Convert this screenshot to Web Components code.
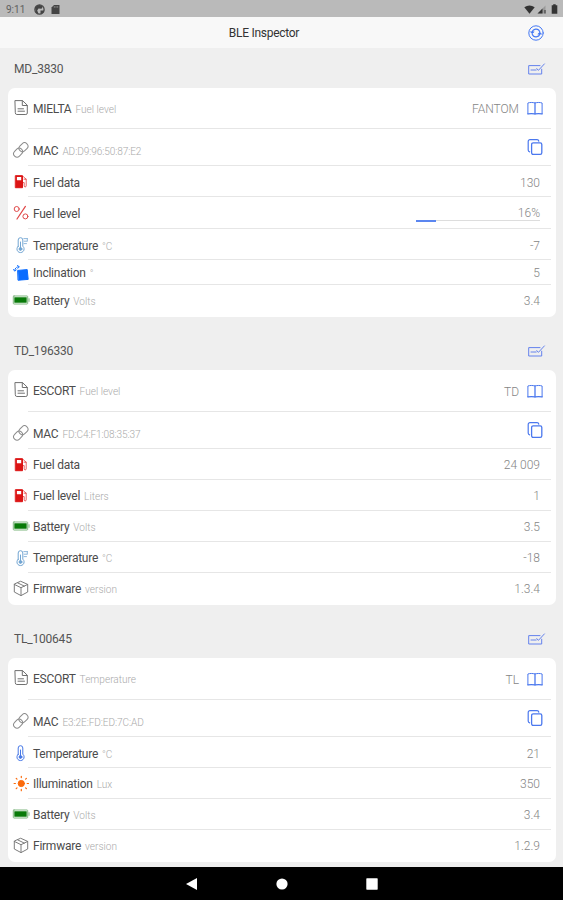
<!DOCTYPE html>
<html lang="en">
<head>
<meta charset="utf-8">
<title>BLE Inspector</title>
<style>
  html, body { margin: 0; height: 100%; overflow: hidden; }
  body { background: #efefef; font-family: Roboto, "Liberation Sans", sans-serif; }
</style>
</head>
<body>
<inspector-screen>
  <status-bar slot="status" time="9:11"></status-bar>
  <title-bar slot="title" name="BLE Inspector"></title-bar>

  <sensor-card name="MD_3830">
    <sensor-row icon="doc" label="MIELTA" note="Fuel level" value="FANTOM" action="book" style="--h: 41px; --dy: 1px"></sensor-row>
    <sensor-row icon="link" label="MAC" note="AD:D9:96:50:87:E2" action="copy" style="--h: 37px; --dy: 4px; --tight: -.1px"></sensor-row>
    <sensor-row icon="fuel" label="Fuel data" value="130" style="--h: 31px; --dy: 2px"></sensor-row>
    <sensor-row icon="percent" label="Fuel level" value="16%" progress="16" style="--h: 32px; --dy: 2px"></sensor-row>
    <sensor-row icon="thermo-pale" label="Temperature" note="°C" value="-7" style="--h: 31px; --dy: 2px"></sensor-row>
    <sensor-row icon="tilt" label="Inclination" note="°" value="5" style="--h: 25px; --dy: 1px"></sensor-row>
    <sensor-row icon="battery" label="Battery" note="Volts" value="3.4" style="--h: 32px"></sensor-row>
  </sensor-card>

  <sensor-card name="TD_196330">
    <sensor-row icon="doc" label="ESCORT" note="Fuel level" value="TD" action="book" style="--h: 42px; --dy: 1px"></sensor-row>
    <sensor-row icon="link" label="MAC" note="FD:C4:F1:08:35:37" action="copy" style="--h: 37px; --dy: 4px; --tight: -.1px"></sensor-row>
    <sensor-row icon="fuel" label="Fuel data" value="24 009" style="--h: 31px; --dy: 1px"></sensor-row>
    <sensor-row icon="fuel" label="Fuel level" note="Liters" value="1" style="--h: 31px; --dy: 1px"></sensor-row>
    <sensor-row icon="battery" label="Battery" note="Volts" value="3.5" style="--h: 31px; --dy: 1px"></sensor-row>
    <sensor-row icon="thermo-pale" label="Temperature" note="°C" value="-18" style="--h: 31px; --dy: 1px"></sensor-row>
    <sensor-row icon="cube" label="Firmware" note="version" value="1.3.4" style="--h: 32px"></sensor-row>
  </sensor-card>

  <sensor-card name="TL_100645">
    <sensor-row icon="doc" label="ESCORT" note="Temperature" value="TL" action="book" style="--h: 42px; --dy: 1px"></sensor-row>
    <sensor-row icon="link" label="MAC" note="E3:2E:FD:ED:7C:AD" action="copy" style="--h: 37px; --dy: 4px; --tight: -.1px"></sensor-row>
    <sensor-row icon="thermo" label="Temperature" note="°C" value="21" style="--h: 31px; --dy: 2px"></sensor-row>
    <sensor-row icon="sun" label="Illumination" note="Lux" value="350" style="--h: 31px; --dy: 1px"></sensor-row>
    <sensor-row icon="battery" label="Battery" note="Volts" value="3.4" style="--h: 31px; --dy: 1px"></sensor-row>
    <sensor-row icon="cube" label="Firmware" note="version" value="1.2.9" style="--h: 32px"></sensor-row>
  </sensor-card>

  <nav-bar slot="nav"></nav-bar>
</inspector-screen>

<script>
(() => {
  const THERMO = '<path d="M5.2 9.2V3a2.3 2.3 0 0 1 4.6 0v6.2a3.6 3.6 0 1 1-4.6 0z"/><path d="M7.5 5v6"/><circle cx="7.5" cy="12" r="1.4" fill="currentColor"/>';

  const ICONS = {
    doc: { color: '#707070', body: '<path d="M2.3.6h7.2l4.8 4.6V13a1.5 1.5 0 0 1-1.5 1.5h-9A1.5 1.5 0 0 1 2.3 13z"/><path d="M9.3.8v4.7h4.8"/><path d="M5 8.8h5.5M5 11.2h6.5"/>' },
    link: { color: '#8c8c8c', body: '<g transform="rotate(-45 8 8)"><rect x="-.8" y="4.4" width="9.8" height="6.8" rx="3.4"/><rect x="6.8" y="4.4" width="9.8" height="6.8" rx="3.4"/></g>' },
    fuel: { color: '#dc1414', body: '<rect x="2.7" y="1.7" width="6.8" height="12" fill="currentColor"/><path d="M3.9 2.9h4.3v3.4H3.9z" fill="#fff" stroke="none"/><path d="M10.3 2.6l2.9 2.7v6.6a1 1 0 0 1-2 0V8.6H9.7" opacity=".65"/><path d="M11 5.2h2.1" opacity=".65"/>' },
    percent: { color: '#e04848', body: '<circle cx="3.7" cy="4" r="2.5"/><circle cx="12.4" cy="11.4" r="2.5"/><path d="M12.4 1.4 4 14" stroke-width="1.2"/>' },
    'thermo-pale': { color: '#72a5d2', body: THERMO + '<path d="M10.8 1.6h3.7M11.2 4.2h2.8M11 6.6h2.5M14.3 2v2" opacity=".8"/>' },
    thermo: { color: '#4778e6', body: THERMO },
    tilt: { color: '#0a6cff', body: '<path d="m5 5.4 9.2-.8 1 9.8-9.8.8z" fill="currentColor"/><path d="M1.8 5.2C2 3.3 3.4 2 5.4 1.8" stroke-dasharray="2.2 1.4"/><path d="m4.4.5 2 1.3-1.7 1.6M.5 4.5l1.2 1.7 1.6-1.3" stroke-width=".9"/>' },
    battery: { color: '#087a08', body: '<rect x=".3" y="3" width="14.4" height="8" rx=".7" stroke="#7db57d"/><path d="M1.3 4.3h12.4v5.4H1.3z" fill="currentColor" stroke="none"/><path d="M16 5.7v2.7" stroke="#7db57d"/>' },
    cube: { color: '#7c7c7c', body: '<path d="m8 .4 6.7 3V11L8 14.6 1.3 11V3.4zM1.3 3.4 8 6.7l6.7-3.3M8 6.7v7.9M4.7 1.9l6.6 3.2"/>' },
    sun: { color: '#fb6a0b', body: '<circle cx="8.3" cy="7.5" r="3.1" fill="currentColor"/><path d="M8.3.3v1.3M8.3 13.4v1.3M1.1 7.5h1.3M14.2 7.5h1.3M3.2 2.4l.8.8M12.6 11.8l.8.8M13.4 2.4l-.8.8M4 11.8l-.8.8" stroke-width="1.2"/>' },
    book: { color: '#4b78ee', body: '<path d="M.9 13.9V3C2.8 2.3 5.8 2.3 8 3c2.2-.7 5.2-.7 7.100 0v10.900"/><path d="M8 3v10.900" stroke-width="1.3"/><path d="M.9 13.900c2-.4 5-.4 7.100 0 2.100-.4 5.100-.4 7.100 0" stroke-width="1.2"/>' },
    copy: { color: '#4b78ee', body: '<rect x="4.6" y="3.8" width="10.2" height="11.6" rx="1.6" stroke-width="1.3"/><path d="M2.6 12.8A1.8 1.8 0 0 1 1.2 11V2.4A1.8 1.8 0 0 1 3 .6h7a1.8 1.8 0 0 1 1.8 1.5" stroke-width="1.2"/>' },
    edit: { color: '#6482ed', body: '<path d="M12 4.6H.7V13h13V8.200"/><path d="m8.8 7.6 1.6 1.8 6-6.5"/><path d="M3 9h5.2" stroke-dasharray="1.4 .7"/>' },
    sync: { color: '#4478f4', body: '<circle cx="8" cy="8" r="7.2"/><path d="M4.2 7.4A3.9 3.9 0 0 1 11.7 6.6M11.8 8.7A3.9 3.9 0 0 1 4.3 9.4" stroke-width="1.2"/><path d="m2.7 6.9 1.5 1.9 1.7-1.7zM10.1 8.9l1.7-1.8 1.6 1.9z" fill="currentColor" stroke-width=".6"/>' }
  };

  class BleIcon extends HTMLElement {
    connectedCallback() {
      if (this.shadowRoot) return;
      const icon = ICONS[this.getAttribute('name')];
      this.attachShadow({ mode: 'open' }).innerHTML = `
        <style>
          :host { display: block; flex: none; width: 16px; height: 16px; color: ${icon.color}; }
          svg {
            display: block; width: 100%; height: 100%; overflow: visible;
            fill: none; stroke: currentColor; stroke-width: 1;
            stroke-linecap: round; stroke-linejoin: round;
          }
        </style>
        <svg viewBox="0 0 16 16" aria-hidden="true">${icon.body}</svg>
      `;
    }
  }

  class StatusBar extends HTMLElement {
    connectedCallback() {
      if (this.shadowRoot) return;
      this.attachShadow({ mode: 'open' }).innerHTML = `
        <style>
          :host {
            display: flex; align-items: center; box-sizing: border-box; height: 17px;
            padding: 1px 5px 0 6px; background: #bababa; color: #606060; font-size: 10px;
          }
          .time { width: 28px; }
          svg { display: block; }
          .globe { margin-right: 6px; }
          .system { display: flex; align-items: center; gap: 2px; margin-left: auto; }
        </style>
        <span class="time">${this.getAttribute('time')}</span>
        <svg class="globe" width="11" height="11" viewBox="0 0 11 11"><circle cx="5.5" cy="5.5" r="4.6" fill="none" stroke="#444" stroke-width="1.3"/><path d="M1 3.2 3.5 1.2 6 1l3 1.5-1.5 2.3-3-.3-1.3 2L4.5 9.800 2 9zM6.5 6.5h4L9 9l-2.500 1z" fill="#444"/></svg>
        <svg width="9" height="11" viewBox="0 0 9 11"><path d="M3 1h5.5v9h-8V3.6z" fill="#444"/><path d="M3.3 2.2v1.5M5 2.2v1.5M6.7 2.2v1.5" stroke="#aaa" stroke-width=".7"/></svg>
        <span class="system">
          <svg width="11" height="9" viewBox="0 0 11 9"><path d="M.3 2.2Q5.5-1 10.7 2.2L5.5 8.7z" fill="#333"/></svg>
          <svg width="9" height="9" viewBox="0 0 9 9"><path d="M8.5.5v8h-8z" fill="#999"/><path d="M5.5 3.5v5h-5zM7.5 5h1v3.5h-1z" fill="#333"/></svg>
          <svg style="margin-left: 3px" width="7" height="10" viewBox="0 0 7 10"><path d="M2.2.3h2.5v1h1.6v8.4H.7V1.3h1.5z" fill="#333"/></svg>
        </span>
      `;
    }
  }

  class TitleBar extends HTMLElement {
    connectedCallback() {
      if (this.shadowRoot) return;
      this.attachShadow({ mode: 'open' }).innerHTML = `
        <style>
          :host {
            display: grid; grid-template-columns: 1fr auto 1fr; align-items: center;
            box-sizing: border-box; height: 31px; padding: 0 19px 0 0; background: #f8f8f8;
          }
          h1 {
            grid-column: 2; margin: 0 16px 0 0; color: #333;
            font-size: 12px; font-weight: 400; line-height: 16px; letter-spacing: -.28px;
          }
          ble-icon { justify-self: end; }
        </style>
        <h1>${this.getAttribute('name')}</h1>
        <ble-icon name="sync"></ble-icon>
      `;
    }
  }

  class SensorCard extends HTMLElement {
    connectedCallback() {
      if (this.shadowRoot) return;
      this.attachShadow({ mode: 'open' }).innerHTML = `
        <style>
          :host { display: block; }
          header {
            display: flex; justify-content: space-between; align-items: center;
            box-sizing: border-box; height: var(--head, 40px); padding: 1px 19px 0 14px;
            color: #555; font-size: 12px; letter-spacing: -.2px;
          }
          section { border-radius: 7px; margin: 0 7px 0 8px; background: #fff; overflow: hidden; }
        </style>
        <header><span>${this.getAttribute('name')}</span><ble-icon name="edit"></ble-icon></header>
        <section><slot></slot></section>
      `;
    }
  }

  class SensorRow extends HTMLElement {
    connectedCallback() {
      if (this.shadowRoot) return;
      const attr = (name) => this.getAttribute(name) || '';
      const action = attr('action');
      const progress = attr('progress');
      this.attachShadow({ mode: 'open' }).innerHTML = `
        <style>
          :host { display: flex; height: var(--h); padding-left: 5px; font-size: 12px; }
          .lead { display: flex; align-items: center; flex: none; width: 15px; }
          .lead ble-icon[name="link"] { margin-top: 5px; }
          .lead ble-icon[name="doc"] { margin-bottom: 2px; }
          .body {
            display: flex; align-items: center; flex: 1; box-sizing: border-box;
            margin-right: 5px; padding-right: 11px; border-bottom: 1px solid #e6e6e6;
          }
          :host(:last-child) .body { border-bottom: 0; }
          .text { padding: calc(var(--dy, 0px) * 2) 0 0 5px; white-space: pre; line-height: 16px; }
          .label { color: #4c4c4c; letter-spacing: -.25px; }
          .note { margin-left: 4px; color: #aaa; font-size: 10.1px; font-weight: 300; letter-spacing: var(--tight, 0); }
          .value { margin-left: auto; padding-top: calc(var(--dy, 0px) * 2); color: #858585; font-weight: 300; line-height: 16px; }
          .gauge { display: flex; flex-direction: column; width: 124px; margin-left: auto; padding-top: 2px; }
          .gauge .value { padding: 0; line-height: 14px; }
          .track { height: 1px; background: #ddd; }
          .fill { height: 2px; background: #5b86f0; }
          .body.has-action { padding-right: 8px; }
          .action { margin-left: 8px; }
          .value:empty + .action { margin-left: 0; }
        </style>
        <div class="lead"><ble-icon name="${attr('icon')}"></ble-icon></div>
        <div class="body ${action ? 'has-action' : ''}">
          <div class="text"><span class="label">${attr('label')}</span><span class="note">${attr('note')}</span></div>
          ${progress
            ? `<div class="gauge"><span class="value">${attr('value')}</span><div class="track"><div class="fill" style="width: ${progress}%"></div></div></div>`
            : `<span class="value">${attr('value')}</span>`}
          ${action ? `<ble-icon class="action" name="${action}"></ble-icon>` : ''}
        </div>
      `;
    }
  }

  class NavBar extends HTMLElement {
    connectedCallback() {
      if (this.shadowRoot) return;
      this.attachShadow({ mode: 'open' }).innerHTML = `
        <style>
          :host { display: flex; justify-content: center; align-items: center; gap: 78px; height: 33px; background: #000; }
          svg { display: block; width: 12px; height: 12px; fill: #fff; }
        </style>
        <svg viewBox="0 0 12 12"><path d="M11 0v12L0 6z"/></svg>
        <svg viewBox="0 0 12 12"><circle cx="6" cy="6" r="5.6"/></svg>
        <svg viewBox="0 0 12 12"><rect x=".3" y=".3" width="11.4" height="11.4" rx=".6"/></svg>
      `;
    }
  }

  class InspectorScreen extends HTMLElement {
    connectedCallback() {
      if (this.shadowRoot) return;
      this.attachShadow({ mode: 'open' }).innerHTML = `
        <style>
          :host { display: flex; flex-direction: column; width: 563px; height: 900px; background: #efefef; }
          main { display: flex; flex-direction: column; flex: 1; min-height: 0; gap: 14px; overflow: hidden; }
          ::slotted(sensor-card:not(:first-of-type)) { --head: 39px; }
        </style>
        <slot name="status"></slot>
        <slot name="title"></slot>
        <main><slot></slot></main>
        <slot name="nav"></slot>
      `;
    }
  }

  customElements.define('ble-icon', BleIcon);
  customElements.define('status-bar', StatusBar);
  customElements.define('title-bar', TitleBar);
  customElements.define('sensor-card', SensorCard);
  customElements.define('sensor-row', SensorRow);
  customElements.define('nav-bar', NavBar);
  customElements.define('inspector-screen', InspectorScreen);
})();
</script>
</body>
</html>
